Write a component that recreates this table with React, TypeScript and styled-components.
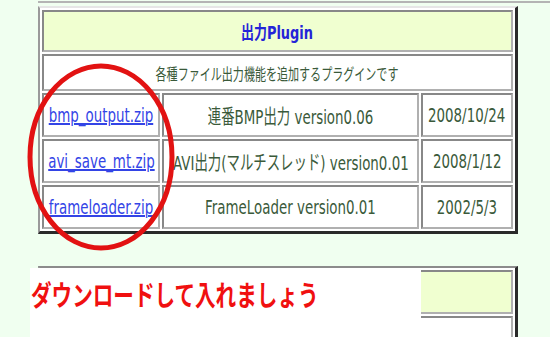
import React from 'react'
import styled, { createGlobalStyle } from 'styled-components'

type Plugin = {
  file: string
  title: string
  date: string
}

const plugins: Plugin[] = [
  { file: 'bmp_output.zip', title: '連番BMP出力 version0.06', date: '2008/10/24' },
  {
    file: 'avi_save_mt.zip',
    title: 'AVI出力(マルチスレッド) version0.01',
    date: '2008/1/12',
  },
  { file: 'frameloader.zip', title: 'FrameLoader version0.01', date: '2002/5/3' },
]

const NARROW = 0.67

export default function App(): JSX.Element {
  return (
    <Page>
      <GlobalStyle />
      <TopRule />
      <PluginTable $top={3} $topColor="#e6e6e6">
        <Cell $wide $head $h={42}>
          <Squeeze $size={18} $x={0.72} $color="#2424d8" $bold>
            出力Plugin
          </Squeeze>
        </Cell>
        <Cell $wide $h={37}>
          <Squeeze $size={16} $x={0.69}>
            各種ファイル出力機能を追加するプラグインです
          </Squeeze>
        </Cell>
        {plugins.map(plugin => (
          <React.Fragment key={plugin.file}>
            <Cell $h={44}>
              <FileLink href={`#${plugin.file}`}>{plugin.file}</FileLink>
            </Cell>
            <Cell $h={44}>
              <Squeeze $size={20}>{plugin.title}</Squeeze>
            </Cell>
            <Cell $h={44}>
              <Squeeze $size={20}>{plugin.date}</Squeeze>
            </Cell>
          </React.Fragment>
        ))}
      </PluginTable>

      <Lower>
        <PluginTable $top={0} $topColor="#8c8c8c">
          <Cell $wide $head $h={44} />
          <Cell $wide $h={44} />
        </PluginTable>
        <Note>
          <Squeeze $size={28} $x={0.735} $color="#f01010" $bold $origin="left">
            ダウンロードして入れましょう
          </Squeeze>
        </Note>
      </Lower>

      <Circle viewBox="0 0 550 337" width={550} height={337}>
        <ellipse
          cx={101}
          cy={157}
          rx={71}
          ry={91}
          fill="none"
          stroke="#e21212"
          strokeWidth={5}
        />
      </Circle>
    </Page>
  )
}

const GlobalStyle = createGlobalStyle`
  html, body {
    margin: 0;
    background: #ffffff;
  }

  body {
    font-family: "DejaVu Sans", "Noto Sans CJK JP", sans-serif;
  }
`

const Page = styled.div`
  position: relative;
  box-sizing: border-box;
  height: 337px;
  padding-top: 1px;
  overflow: hidden;
  background: #f0fff0;
`

const TopRule = styled.div`
  margin-left: 38px;
  height: 2px;
  background: #b4b4b4;
`

const PluginTable = styled.div<{ $top: number; $topColor: string }>`
  display: grid;
  grid-template-columns: 118px 257px 92px;
  gap: 2px;
  width: max-content;
  margin: ${({ $top }) => $top}px 0 0 38px;
  padding: 2px;
  background: #ffffff;
  border-style: solid;
  border-width: 2px 3px 3px 2px;
  border-color: ${({ $topColor }) => $topColor} #2a2a2a #2a2a2a #9a9a9a;
`

const Cell = styled.div<{ $h: number; $wide?: boolean; $head?: boolean }>`
  grid-column: ${({ $wide }) => ($wide ? '1 / -1' : 'auto')};
  display: flex;
  align-items: center;
  justify-content: center;
  box-sizing: border-box;
  min-width: 0;
  height: ${({ $h }) => $h}px;
  border: 2px solid;
  border-color: #888888 #b0b0b0 #b0b0b0 #888888;
  background: ${({ $head }) => ($head ? '#f0ffd0' : '#ffffff')};
`

const Squeeze = styled.span<{
  $size: number
  $x?: number
  $color?: string
  $bold?: boolean
  $origin?: string
}>`
  display: inline-block;
  flex-shrink: 0;
  white-space: nowrap;
  font-size: ${({ $size }) => $size}px;
  font-weight: ${({ $bold }) => ($bold ? 700 : 400)};
  color: ${({ $color }) => $color ?? '#3a5a3a'};
  transform: scaleX(${({ $x }) => $x ?? NARROW});
  transform-origin: ${({ $origin }) => $origin ?? 'center'};
`

const FileLink = styled.a`
  display: inline-block;
  flex-shrink: 0;
  white-space: nowrap;
  font-size: 20px;
  color: #3344e6;
  text-decoration: underline;
  transform: scaleX(${NARROW});
`

const Lower = styled.div`
  position: relative;
  margin-top: 32px;
`

const Note = styled.div`
  position: absolute;
  top: 2px;
  left: 30px;
  width: 391px;
  height: 80px;
  box-sizing: border-box;
  padding: 12px 0 0 1px;
  line-height: 34px;
  background: #ffffff;
`

const Circle = styled.svg`
  position: absolute;
  top: 0;
  left: 0;
  pointer-events: none;
`
